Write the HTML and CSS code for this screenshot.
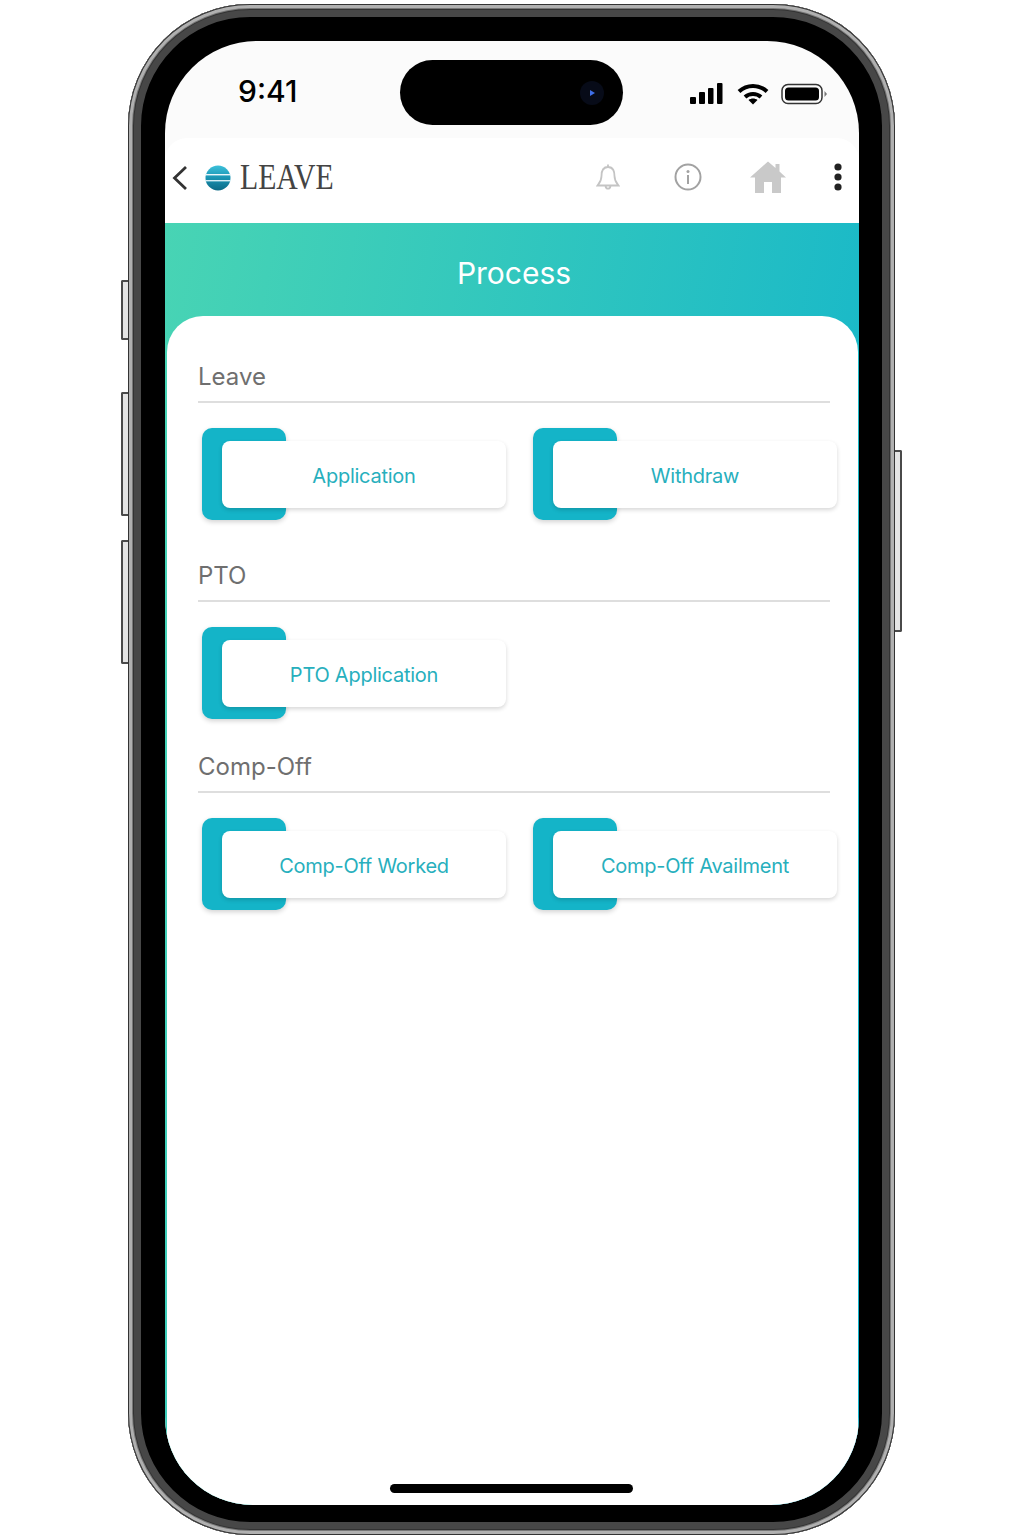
FILE: index.html
```html
<!DOCTYPE html>
<html lang="en">
<head>
    <meta charset="UTF-8">
    <meta name="viewport" content="width=device-width, initial-scale=1.0">
    <title>Leave - Process</title>
    <link rel="stylesheet" href="styles.css">
</head>
<body>
    <div class="phone">
        <!-- Side buttons -->
        <span class="side-btn side-btn-mute"></span>
        <span class="side-btn side-btn-up"></span>
        <span class="side-btn side-btn-down"></span>
        <span class="side-btn side-btn-power"></span>

        <div class="screen">
            <!-- Status bar -->
            <div class="status-bar">
                <div class="status-time">9:41</div>
                <div class="island">
                    <svg width="24" height="24" viewBox="0 0 24 24">
                        <circle cx="12" cy="12" r="12" fill="#070b18"/>
                        <path d="M10 9 L15 12 L10 15 Z" fill="#3f6fe8"/>
                    </svg>
                </div>
                <div class="status-icons">
                    <svg width="33" height="22" viewBox="0 0 33 22">
                        <rect x="0" y="14" width="6" height="7" rx="1"/>
                        <rect x="9" y="9" width="6" height="12" rx="1"/>
                        <rect x="18" y="5" width="5.5" height="16" rx="1"/>
                        <rect x="27" y="0" width="5.5" height="21" rx="1"/>
                    </svg>
                    <svg class="wifi" width="32" height="22" viewBox="0 0 32 22">
                        <path d="M2 8.5 C10 1 22 1 30 8.5" fill="none" stroke="#000" stroke-width="4"/>
                        <path d="M8 14 C12.5 10 19.5 10 24 14" fill="none" stroke="#000" stroke-width="4"/>
                        <path d="M11.5 17 C14 15 18 15 20.5 17 L16 21.5 Z"/>
                    </svg>
                    <svg class="battery" width="46" height="22" viewBox="0 0 46 22">
                        <rect x="1" y="1.5" width="40" height="19" rx="6" fill="none" stroke="#333" stroke-width="1.5"/>
                        <rect x="4" y="4.5" width="34" height="13" rx="3.5"/>
                        <path d="M43.5 8 L46 11 L43.5 14 Z" fill="#777"/>
                    </svg>
                </div>
            </div>

            <!-- Header -->
            <header class="app-header">
                <svg class="back" width="16" height="28" viewBox="0 0 16 28">
                    <path d="M14 3 L2.5 14 L14 25" fill="none" stroke="#333" stroke-width="2.8"/>
                </svg>
                <svg class="globe" width="26" height="26" viewBox="0 0 26 26">
                    <defs>
                        <linearGradient id="globeFill" x1="0" y1="0" x2="0" y2="1">
                            <stop offset="0" stop-color="#3cc0da"/>
                            <stop offset="0.5" stop-color="#1a93b2"/>
                            <stop offset="1" stop-color="#0b6a86"/>
                        </linearGradient>
                    </defs>
                    <circle cx="13" cy="13" r="12.5" fill="url(#globeFill)"/>
                    <rect x="0" y="9" width="26" height="1.4" fill="#eaf6fa"/>
                    <rect x="0" y="15" width="26" height="1.4" fill="#d5eef4"/>
                </svg>
                <div class="logo-text">LEAVE</div>
                <div class="header-icons">
                    <svg width="24" height="28" viewBox="0 0 24 28">
                        <path d="M12 1.5 V4 M12 4 C6.5 4 5.5 9 5.5 13 C5.5 18 3.5 20 1.5 22.5 H22.5 C20.5 20 18.5 18 18.5 13 C18.5 9 17.5 4 12 4 Z M9.5 23 C10 26.5 14 26.5 14.5 23" fill="none" stroke="#c4c4c4" stroke-width="1.8"/>
                    </svg>
                    <svg class="icon-info" width="28" height="28" viewBox="0 0 28 28">
                        <circle cx="14" cy="14" r="12.5" fill="none" stroke="#a2a2a2" stroke-width="2"/>
                        <circle cx="14" cy="8.5" r="1.5" fill="#a2a2a2"/>
                        <rect x="13" y="12" width="2" height="9" fill="#a2a2a2"/>
                    </svg>
                    <svg class="icon-home" width="36" height="32" viewBox="0 0 36 32">
                        <path d="M18 0.5 L25.5 7 V3 H29.5 V10.5 L36 16.5 H31 V32 H22 V21 H14 V32 H5 V16.5 H0 Z" fill="#c9c9c9"/>
                    </svg>
                    <svg class="icon-more" width="8" height="28" viewBox="0 0 8 28">
                        <circle cx="4" cy="4" r="3.6" fill="#222"/>
                        <circle cx="4" cy="14" r="3.6" fill="#222"/>
                        <circle cx="4" cy="24" r="3.6" fill="#222"/>
                    </svg>
                </div>
            </header>

            <!-- Main -->
            <main class="main">
                <h1 class="page-title">Process</h1>
                <div class="sheet">
                    <section class="group">
                        <h2 class="group-title">Leave</h2>
                        <div class="tiles">
                            <div class="tile"><div class="tile-card">Application</div></div>
                            <div class="tile"><div class="tile-card">Withdraw</div></div>
                        </div>
                    </section>
                    <section class="group group-short">
                        <h2 class="group-title">PTO</h2>
                        <div class="tiles">
                            <div class="tile"><div class="tile-card">PTO Application</div></div>
                        </div>
                    </section>
                    <section class="group">
                        <h2 class="group-title">Comp-Off</h2>
                        <div class="tiles">
                            <div class="tile"><div class="tile-card">Comp-Off Worked</div></div>
                            <div class="tile"><div class="tile-card">Comp-Off Availment</div></div>
                        </div>
                    </section>
                    <div class="home-indicator"></div>
                </div>
            </main>
        </div>
    </div>
</body>
</html>
```

FILE: styles.css
```css
html, body {
    height: 100%;
}

body {
    margin: 0;
    padding: 4px 0 0 128px;
    box-sizing: border-box;
    background: white;
    font-family: Inter, "Noto Sans", sans-serif;
    overflow: hidden;
}

/* Phone frame */
.phone {
    position: relative;
    box-sizing: border-box;
    width: 767px;
    height: 1531px;
    padding: 37px 36px 30px 37px;
    background: black;
    border-radius: 122px;
    box-shadow:
        inset 0 0 0 1px #333,
        inset 0 0 0 4px #b0b0b0,
        inset 0 0 0 5px #777,
        inset 0 0 0 6px #333,
        inset 0 0 0 13px #474747;
}

.side-btn {
    position: absolute;
    box-sizing: border-box;
    width: 7px;
    background: #e4e4e4;
    border: 2px solid #4a4a4a;
}

.side-btn-mute,
.side-btn-up,
.side-btn-down {
    left: -7px;
    border-right: none;
    border-radius: 2px 0 0 2px;
}

.side-btn-mute {
    top: 276px;
    height: 60px;
}

.side-btn-up {
    top: 388px;
    height: 124px;
}

.side-btn-down {
    top: 536px;
    height: 124px;
}

.side-btn-power {
    right: -7px;
    top: 446px;
    height: 182px;
    border-left: none;
    border-radius: 0 2px 2px 0;
}

.screen {
    display: flex;
    flex-direction: column;
    height: 100%;
    background: #fbfbfb;
    border-radius: 92px 92px 88px 88px;
    overflow: hidden;
}

/* Status bar */
.status-bar {
    display: grid;
    grid-template-columns: 235px 223px 1fr;
    align-items: center;
    height: 97px;
    box-sizing: border-box;
    padding-top: 19px;
    padding-bottom: 13px;
}

.status-time {
    padding-left: 73px;
    padding-bottom: 3px;
    font-size: 30px;
    font-weight: 500;
    color: black;
}

.island {
    display: flex;
    align-items: center;
    justify-content: flex-end;
    height: 65px;
    padding-right: 19px;
    box-sizing: border-box;
    background: black;
    border-radius: 33px;
}

.status-icons {
    display: flex;
    align-items: center;
    padding-top: 2px;
    padding-left: 67px;
}

.wifi {
    margin-left: 14px;
}

.battery {
    margin-left: 12px;
}

/* App header */
.app-header {
    display: flex;
    align-items: center;
    height: 85px;
    box-sizing: border-box;
    padding: 0 17px 6px 7px;
    background: white;
    border-radius: 22px 22px 0 0;
}

.globe {
    margin-left: 17px;
}

.logo-text {
    margin-left: 9px;
    font-family: "Liberation Serif", serif;
    font-size: 35px;
    color: #444;
    transform: scaleX(0.85);
    transform-origin: left center;
}

.header-icons {
    display: flex;
    align-items: center;
    margin-left: auto;
    margin-top: -2px;
}

.icon-info {
    margin-left: 54px;
}

.icon-home {
    margin-left: 48px;
}

.icon-more {
    margin-left: 48px;
}

/* Main */
.main {
    display: flex;
    flex-direction: column;
    flex: 1;
    background: linear-gradient(100deg, #48d4b4, #0eb2cd);
}

.page-title {
    margin: 0;
    height: 93px;
    line-height: 100px;
    padding-left: 4px;
    font-size: 30px;
    font-weight: 400;
    text-align: center;
    color: white;
}

.sheet {
    display: flex;
    flex-direction: column;
    flex: 1;
    margin: 0 1px 0 2px;
    padding: 46px 28px 12px 31px;
    background: white;
    border-radius: 36px 36px 0 0;
}

.group {
    margin-bottom: 41px;
}

.group-short {
    margin-bottom: 33px;
}

.group-title {
    margin: 0;
    height: 30px;
    line-height: 30px;
    padding-bottom: 9px;
    border-bottom: 2px solid #dedede;
    font-size: 24px;
    font-weight: 400;
    color: #6f6f6f;
}

.tiles {
    display: grid;
    grid-template-columns: 304px 304px;
    column-gap: 27px;
    margin: 25px -7px 0 4px;
}

.tile {
    position: relative;
    height: 92px;
    box-sizing: border-box;
    padding: 13px 0 12px 20px;
}

/* Teal block behind the card */
.tile::before {
    content: "";
    position: absolute;
    left: 0;
    top: 0;
    width: 84px;
    height: 92px;
    background: #14b4c8;
    border-radius: 10px;
    box-shadow: 0 2px 5px rgba(0, 0, 0, 0.18);
}

.tile-card {
    position: relative;
    display: flex;
    align-items: center;
    justify-content: center;
    height: 100%;
    box-sizing: border-box;
    padding-top: 2px;
    background: white;
    border-radius: 8px;
    box-shadow: 0 2px 4px rgba(0, 0, 0, 0.16);
    font-size: 20px;
    letter-spacing: -0.25px;
    color: #27afbd;
}

.home-indicator {
    width: 243px;
    height: 9px;
    margin: auto 0 0 192px;
    background: black;
    border-radius: 5px;
}
```
